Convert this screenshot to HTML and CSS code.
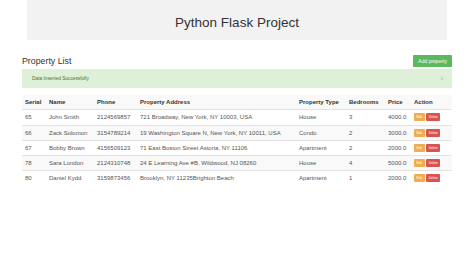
FILE: index.html
```html
<!DOCTYPE html>
<html>
<head>
<title>Python Flask Project</title>
<link rel="stylesheet" href="styles.css">
</head>
<body>
<div class="jumbotron">
<h1>Python Flask Project</h1>
</div>
<div class="container">
<div class="heading">
<h2>Property List</h2>
<a href="#" class="btn btn-success">Add property</a>
</div>
<div class="alert">
Data Inserted Successfully
<span class="close">&times;</span>
</div>
<table class="table">
<colgroup>
<col style="width:24px"><col style="width:48px"><col style="width:43px"><col style="width:159px">
<col style="width:50px"><col style="width:39px"><col style="width:26px"><col style="width:41px">
</colgroup>
<tr>
<th>Serial</th><th>Name</th><th>Phone</th><th>Property Address</th><th>Property Type</th><th>Bedrooms</th><th>Price</th><th>Action</th>
</tr>
<tr>
<td>65</td><td>John Smith</td><td>2124569857</td><td>721 Broadway, New York, NY 10003, USA</td><td>House</td><td>3</td><td>4000.0</td>
<td><a href="#" class="btn btn-warning">Edit</a> <a href="#" class="btn btn-danger">Delete</a></td>
</tr>
<tr>
<td>66</td><td>Zack Solomon</td><td>3154789214</td><td>19 Washington Square N, New York, NY 10011, USA</td><td>Condo</td><td>2</td><td>3000.0</td>
<td><a href="#" class="btn btn-warning">Edit</a> <a href="#" class="btn btn-danger">Delete</a></td>
</tr>
<tr>
<td>67</td><td>Bobby Brown</td><td>4156509123</td><td>71 East Boston Street Astoria, NY 11106</td><td>Apartment</td><td>2</td><td>2000.0</td>
<td><a href="#" class="btn btn-warning">Edit</a> <a href="#" class="btn btn-danger">Delete</a></td>
</tr>
<tr>
<td>78</td><td>Sara London</td><td>2124310748</td><td>24 E Learning Ave #B, Wildwood, NJ 08260</td><td>House</td><td>4</td><td>5000.0</td>
<td><a href="#" class="btn btn-warning">Edit</a> <a href="#" class="btn btn-danger">Delete</a></td>
</tr>
<tr>
<td>80</td><td>Daniel Kydd</td><td>3159873456</td><td>Brooklyn, NY 11235Brighton Beach</td><td>Apartment</td><td>1</td><td>2000.0</td>
<td><a href="#" class="btn btn-warning">Edit</a> <a href="#" class="btn btn-danger">Delete</a></td>
</tr>
</table>
</div>
</body>
</html>
```
FILE: styles.css
```css
body {
	margin: 0;
	font-family: "Liberation Sans", Arial, sans-serif;
	font-size: 6px;
	color: #333;
	background: white;
}
.jumbotron {
	margin: 0 27px;
	height: 40px;
	background: #f2f2f2;
	display: flex;
	align-items: center;
	justify-content: center;
}
h1 {
	margin: 0;
	padding-top: 4px;
	font-size: 13.5px;
	font-weight: normal;
}
.container {
	padding: 0 22px;
}
.heading {
	display: flex;
	justify-content: space-between;
	align-items: center;
	margin-top: 15px;
	height: 12px;
}
h2 {
	margin: 0;
	font-size: 8.8px;
	font-weight: normal;
}
.btn {
	display: inline-block;
	color: white;
	text-decoration: none;
	border-radius: 1px;
}
.btn-success {
	background: #5cb85c;
	font-size: 5px;
	line-height: 12px;
	padding: 0 5px;
}
.btn-warning {
	background: #f0ad4e;
}
.btn-danger {
	background: #d9534f;
}
td .btn {
	font-size: 3.2px;
	line-height: 8px;
	padding: 0 2.5px;
	vertical-align: middle;
}
.alert {
	margin-top: 2px;
	height: 19px;
	display: flex;
	align-items: center;
	justify-content: space-between;
	padding: 0 8px 0 10px;
	background: #dff0d8;
	color: #3c763d;
	font-size: 4.8px;
}
.close {
	color: #b6c9ae;
	font-size: 7px;
}
.table {
	margin-top: 7px;
	width: 430px;
	table-layout: fixed;
	border-collapse: collapse;
	font-size: 6px;
}
.table th, .table td {
	height: 14.25px;
	padding: 0 3px;
	text-align: left;
	white-space: nowrap;
	overflow: hidden;
	border-top: 0.5px solid #e2e2e2;
}
.table th {
	font-weight: bold;
	border-top: none;
}
.table td {
	color: #555;
}
.table tr:nth-child(odd) {
	background: #f9f9f9;
}
```
